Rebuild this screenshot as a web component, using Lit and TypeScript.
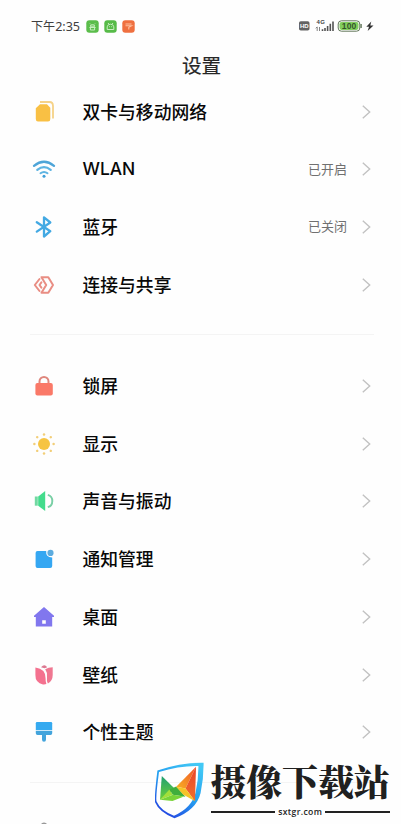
import { LitElement, html, css, svg, TemplateResult } from "lit";
import { customElement, property } from "lit/decorators.js";

const rays = [0, 45, 90, 135, 180, 225, 270, 315];

const icons: Record<string, TemplateResult> = {
  sim: svg`
    <path d="M8 2H17.5Q21 2 21 6V18.5" fill="none" stroke="#f6d287" stroke-width="1.8"/>
    <path d="M8 4.2H15L18.3 7.8V19Q18.3 21.5 16 21.5H6Q3.8 21.5 3.8 19V8.2Z" fill="#f9c044"/>`,
  wifi: svg`
    <g fill="none" stroke-linecap="round">
      <path d="M2 8.8Q12 .8 22 8.8" stroke="#4ea5d8" stroke-width="2.3"/>
      <path d="M5.3 12.8Q12 7.5 18.7 12.8" stroke="#5eb4e2" stroke-width="2.3"/>
      <path d="M8.5 16.2Q12 13.6 15.5 16.2" stroke="#5eb4e2" stroke-width="2"/>
    </g><circle cx="12" cy="19.2" r="1.5" fill="#3f9fd8"/>`,
  bluetooth: svg`
    <path d="M4.8 7.2L18.3 16.2L12 21.5V2.3L18.3 7.5L4.8 16.6" fill="none" stroke="#43a9e3" stroke-width="2.3" stroke-linejoin="round" stroke-linecap="round"/>`,
  share: svg`
    <g fill="none" stroke="#e98e84" stroke-width="2" stroke-linejoin="round" stroke-linecap="round">
      <path d="M9.5 4.2H16.3L21 12L16.3 19.8H9.5L14.2 12Z"/>
      <path d="M7.5 6L2.8 12L7.5 18"/><path d="M9.4 9.3L7.5 12L9.4 14.7"/>
    </g>`,
  lock: svg`
    <path d="M7.5 11V7.4a4.5 4.5 0 0 1 9 0V11" fill="none" stroke="#df877d" stroke-width="2"/>
    <rect x="3.4" y="9" width="17.4" height="12.5" rx="2" fill="#fa7968"/>`,
  sun: svg`
    <circle cx="12" cy="12" r="6" fill="#f6c443"/>
    ${rays.map(a => svg`<circle cx="12" cy="2.4" r="1.25" fill="#f2ce78" transform="rotate(${a} 12 12)"/>`)}`,
  sound: svg`
    <path d="M2.8 7.5H5.8V16.7H2.8Z" fill="#72d9a2"/>
    <path d="M6.2 7.6L13.2 2V22L6.2 16.7Z" fill="#43dc8c"/>
    <path d="M15.8 5.8Q20.3 7 20.3 12T15.8 18.2" fill="none" stroke="#79cfa5" stroke-width="1.9"/>`,
  notice: svg`
    <path d="M5.5 4H14.2Q13.5 10 20.2 10.5V19Q20.2 21 18.2 21H5.5Q3.6 21 3.6 19V6Q3.6 4 5.5 4Z" fill="#35a7f2"/>
    <circle cx="18.5" cy="5.9" r="3.1" fill="#5dacdf"/>`,
  home: svg`
    <path fill-rule="evenodd" d="M12 2L22 10.8V12H20.2V21.6H3.8V12H2V10.8ZM10.2 15.2V18.8H13.8V15.2Z" fill="#8177ee"/>`,
  tulip: svg`
    <path d="M9 4.2Q10.8 2.2 12.3 2.2Q13.8 2.4 15.2 4.2L12.6 5.3Z" fill="#dc7891"/>
    <path d="M3.4 4.4Q13.8 5.6 13.6 15.4Q13.4 18.2 14.4 21Q12.6 21.7 11 21.4Q3.2 19.8 3.4 12Z" fill="#f4718f"/>
    <path d="M13.2 6.3Q16.5 4.5 20.7 4.3V12Q20.7 17.9 15.9 20.5Q14.5 18 15 14.2Q15.6 9.5 13.2 6.3Z" fill="#ef7791"/>`,
  brush: svg`
    <path d="M5 2H19Q20.2 2 20.2 3.2V10.2H3.8V3.2Q3.8 2 5 2Z" fill="#35aaf0"/>
    <path d="M3.8 11H20.2V13.2Q20.2 14.9 18.5 14.9H14V19.5Q14 21.7 12 21.7T10 19.5V14.9H5.5Q3.8 14.9 3.8 13.2Z" fill="#43a4dc"/>`,
};

@customElement("setting-row")
class SettingRow extends LitElement {
  @property() icon = "";
  @property() label = "";
  @property() value = "";

  static styles = css`
    :host { display: flex; align-items: center; height: 57.7px; padding: 0 29px 0 32px; }
    .icon { width: 24px; height: 24px; flex: none; }
    .label { flex: 1; margin-left: 26.5px; padding-bottom: 2px; font-size: 17.8px; font-weight: 500; line-height: 26px; color: #080808; white-space: nowrap; }
    .latin { padding-bottom: 0; font-family: Inter, "Noto Sans", sans-serif; font-size: 17.4px; }
    .value { font-size: 13px; line-height: 20px; color: #707070; margin-right: 14px; padding-bottom: 1px; }
    .arrow { width: 11px; height: 16px; flex: none; }
  `;

  render() {
    const latin = /^[A-Z]+$/.test(this.label);
    return html`
      <svg class="icon" viewBox="0 0 24 24">${icons[this.icon]}</svg>
      <span class="label ${latin ? "latin" : ""}">${this.label}</span>
      <span class="value">${this.value}</span>
      <svg class="arrow" viewBox="0 0 11 16"><path d="M1.8 1.8L8.7 8L1.8 14.2" fill="none" stroke="#c2c2c2" stroke-width="1.4"/></svg>
    `;
  }
}

@customElement("status-bar")
class StatusBar extends LitElement {
  static styles = css`
    :host { display: flex; align-items: center; height: 52px; padding: 0 25px 0 31px; box-sizing: border-box; }
    .time { font-size: 12.1px; line-height: 20px; color: #404040; width: 55px; white-space: nowrap; }
    .digits { font-family: "Noto Sans", sans-serif; font-size: 12.6px; letter-spacing: -.05px; }
    .apps { display: flex; gap: 5px; }
    .app { width: 13px; height: 13px; }
    .spacer { flex: 1; }
    .signals { width: 78px; height: 16px; }
    .tiny { font: 700 6px "Liberation Sans", sans-serif; }
    .level { font: 700 8.5px "Liberation Sans", sans-serif; }
  `;

  render() {
    return html`
      <span class="time">下午<span class="digits">2:35</span></span>
      <div class="apps">
        <svg class="app" viewBox="0 0 13 13"><rect x=".3" y=".3" width="12.4" height="12.4" rx="3" fill="#5bbd4b"/><path d="M4 3.5L5 4.5M9 3.5L8 4.5M4 6.2Q6.5 3 9 6.2ZM3.4 7.5H9.6M4.4 7.5V10H8.6V7.5" fill="none" stroke="#c8edc0" stroke-width="1"/></svg>
        <svg class="app" viewBox="0 0 13 13"><rect x=".3" y=".3" width="12.4" height="12.4" rx="3" fill="#57bb48"/><path d="M4 3L5 4.2M9 3L8 4.2M3.2 6.8Q3.5 4.2 6.5 4.2T9.8 6.8V9.5H3.2ZM5 6.7H5.8M7.3 6.7H8.1" fill="none" stroke="#c8edc0" stroke-width="1"/></svg>
        <svg class="app" viewBox="0 0 13 13"><rect x=".3" y=".3" width="12.4" height="12.4" rx="3" fill="#ef7040"/><path d="M3.5 4H9.5M3.5 5.7H9.5L6.8 7.2V9.5" fill="none" stroke="#ffc09e" stroke-width="1.1"/></svg>
      </div>
      <div class="spacer"></div>
      <svg class="signals" viewBox="0 0 78 16">
        <rect x="1" y="3.2" width="10.5" height="9.3" rx="1.8" fill="#626262"/>
        <text class="tiny" x="2" y="10.1" fill="#fff" textLength="8.5">HD</text>
        <text class="tiny" x="18.5" y="6" fill="#444" textLength="8.5">4G</text>
        <path d="M19.2 9V13M17.8 10.3L19.2 8.8M21.5 9V13" stroke="#777" stroke-width=".9" fill="none"/>
        <path d="M24.5 13V11.3M27 13V10M29.6 13V8M32.3 13V5.7M35 13V3.5" stroke="#535353" stroke-width="1.6"/>
        <rect x="40.2" y="2.8" width="21.6" height="10.4" rx="3.2" fill="#fff" stroke="#63775b" stroke-width="1"/>
        <rect x="41.5" y="4.1" width="19" height="7.8" rx="2.1" fill="#83cf5d"/>
        <path d="M63.1 6V10" stroke="#63775b" stroke-width="1.4"/>
        <text class="level" x="43.7" y="11" fill="#33552a" textLength="14.6">100</text>
        <path d="M73.3 3.5L68.3 8.7H71L69.7 13L75.5 7.5H72.3Z" fill="#333"/>
      </svg>
    `;
  }
}

@customElement("site-mark")
class SiteMark extends LitElement {
  static styles = css`
    :host { display: flex; width: 236px; height: 64px; }
    .shield { width: 52px; height: 61px; flex: none; }
    .words { margin-left: 3.5px; width: 179.5px; }
    .name { font-family: "Noto Serif CJK SC", "Source Han Serif SC", "Noto Sans CJK SC", sans-serif; font-weight: 900; font-size: 35.8px; line-height: 42px; height: 46px; color: #202020; white-space: nowrap; }
    .site { display: flex; align-items: center; gap: 3px; height: 12px; }
    .rule { flex: 1; height: 1.6px; background: #222; }
    .domain { font-family: "Open Sans", "Noto Sans", sans-serif; font-weight: 600; font-size: 8.6px; line-height: 12px; letter-spacing: .35px; color: #222; }
  `;

  render() {
    return html`
      <svg class="shield" viewBox="0 0 52 61">
        <defs>
          <linearGradient id="edge" x1=".8" y1="0" x2=".2" y2="1"><stop stop-color="#42c8f5"/><stop offset=".5" stop-color="#249ef0"/><stop offset="1" stop-color="#233ee0"/></linearGradient>
          <linearGradient id="left" x1="0" y1="0" x2="0" y2="1"><stop stop-color="#1f9f72"/><stop offset="1" stop-color="#6cd038"/></linearGradient>
          <linearGradient id="peak" x1="1" y1="0" x2="0" y2="1"><stop stop-color="#f0512b"/><stop offset="1" stop-color="#f8b222"/></linearGradient>
          <linearGradient id="right" x1="0" y1="0" x2="0" y2="1"><stop stop-color="#e8432a"/><stop offset="1" stop-color="#f2702a"/></linearGradient>
        </defs>
        <path fill-rule="evenodd" fill="url(#edge)" d="M2.4 10.6Q25 2.3 48.6 2.7Q48.8 18 45.6 33Q41.5 50 19.5 58.3Q4 52 .2 42.5Q-1 39 2.4 10.6ZM4 12Q.4 38.5 1.6 41.5Q5.5 50.5 19 55.7Q36.5 48 40.5 33Q43.6 19 43.4 6Q24 5.6 4 12Z"/>
        <path fill="url(#left)" d="M6.8 16L19.5 28.6L14 34L5 39.8Z"/>
        <path fill="#a2df3a" d="M5 39.8L14.4 29.5L17.8 34.8Z"/>
        <path fill="#3fae3c" d="M14.4 29.5L21.2 26.5L30.5 36.8L17.8 34.8Z"/>
        <path fill="#78d338" d="M5 39.8L17.8 34.8L29 36.6L17.5 41Z"/>
        <path fill="url(#peak)" d="M21.2 26.8L41 6.8L30.5 28.5Z"/>
        <path fill="url(#right)" d="M41 6.8L40 41.3L30.5 28.5Z"/>
        <path fill="#f7c327" d="M21.2 26.8L30.5 28.5L40 41.3L28.2 34.5Z"/>
      </svg>
      <div class="words">
        <div class="name">摄像下载站</div>
        <div class="site"><i class="rule"></i><span class="domain">sxtgr.com</span><i class="rule"></i></div>
      </div>
    `;
  }
}

@customElement("app-root")
class AppRoot extends LitElement {
  static styles = css`
    :host { display: block; position: relative; height: 824px; overflow: hidden; background: #fefefe; font-family: "Noto Sans CJK SC", sans-serif; }
    .title { margin: 0; height: 30.7px; font-size: 19.6px; line-height: 26px; font-weight: 400; color: #262626; text-align: center; padding-left: 2px; -webkit-text-stroke: .2px #262626; }
    .divider { height: 1px; margin: 20.5px 27px 22.3px 30px; background: #f4f4f4; }
    .next { height: 40px; padding-left: 32px; }
    .peek { display: block; width: 24px; height: 24px; margin-top: 38px; }
    .mark { position: absolute; left: 155px; top: 760px; }
  `;

  render() {
    return html`
      <status-bar></status-bar>
      <h1 class="title">设置</h1>
      <setting-row icon="sim" label="双卡与移动网络"></setting-row>
      <setting-row icon="wifi" label="WLAN" value="已开启"></setting-row>
      <setting-row icon="bluetooth" label="蓝牙" value="已关闭"></setting-row>
      <setting-row icon="share" label="连接与共享"></setting-row>
      <div class="divider"></div>
      <setting-row icon="lock" label="锁屏"></setting-row>
      <setting-row icon="sun" label="显示"></setting-row>
      <setting-row icon="sound" label="声音与振动"></setting-row>
      <setting-row icon="notice" label="通知管理"></setting-row>
      <setting-row icon="home" label="桌面"></setting-row>
      <setting-row icon="tulip" label="壁纸"></setting-row>
      <setting-row icon="brush" label="个性主题"></setting-row>
      <div class="divider"></div>
      <div class="next"><svg class="peek" viewBox="0 0 24 24"><circle cx="12" cy="4.8" r="3.3" fill="#999"/></svg></div>
      <site-mark class="mark"></site-mark>
    `;
  }
}
